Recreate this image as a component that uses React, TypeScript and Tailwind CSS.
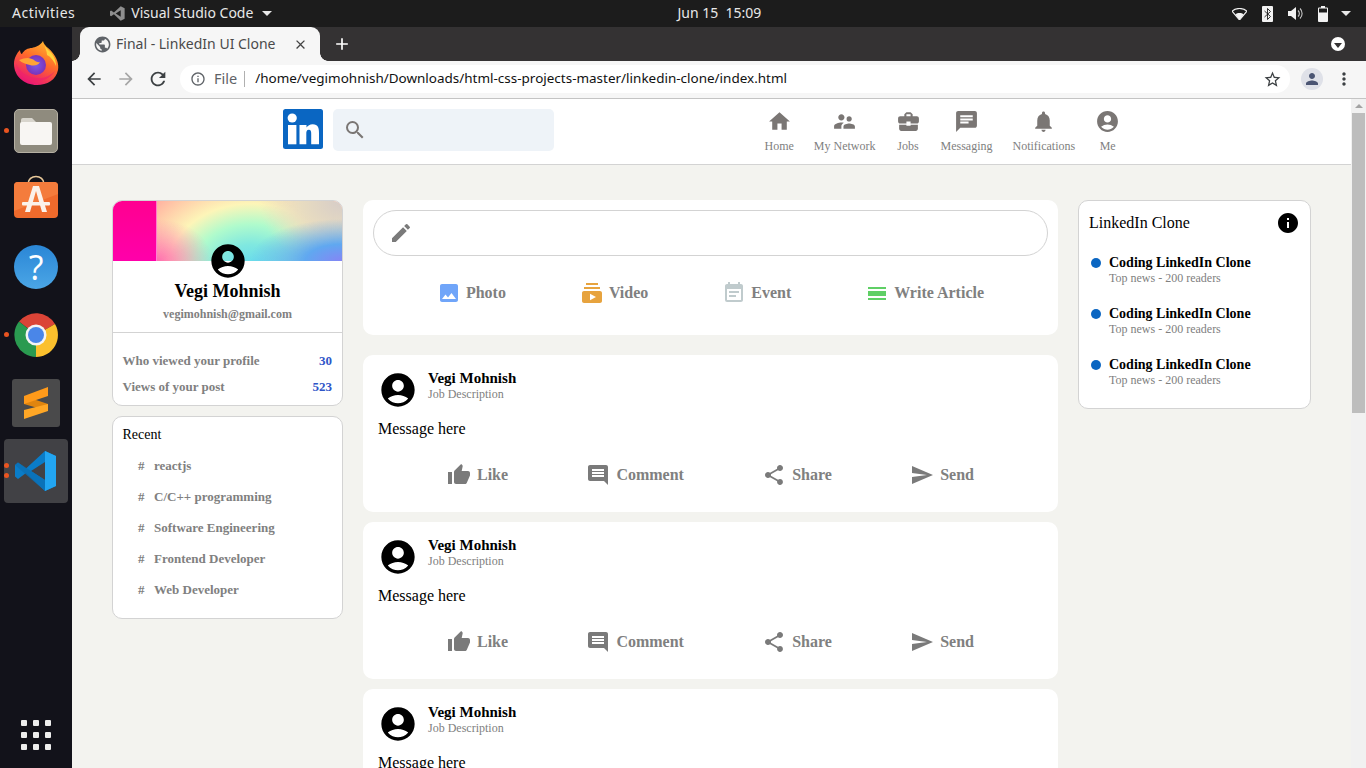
import type { ReactNode } from 'react'
import {
  MdAccountCircle,
  MdAdd,
  MdArrowBack,
  MdArrowForward,
  MdBusinessCenter,
  MdCalendarViewDay,
  MdChat,
  MdClose,
  MdComment,
  MdCreate,
  MdEventNote,
  MdHome,
  MdImage,
  MdInfo,
  MdInfoOutline,
  MdMoreVert,
  MdNotifications,
  MdPerson,
  MdPublic,
  MdRefresh,
  MdSearch,
  MdSend,
  MdShare,
  MdStarBorder,
  MdSubscriptions,
  MdSupervisorAccount,
  MdThumbUp,
} from 'react-icons/md'

const RunDot = ({ className }: { className: string }) => (
  <span className={`absolute left-[4px] h-[5px] w-[5px] rounded-full bg-[#e95420] ${className}`} />
)

const Firefox = () => (
  <svg width="46" height="46" viewBox="0 0 46 46">
    <defs>
      <linearGradient id="ffBody" x1="0.8" y1="0" x2="0.3" y2="1">
        <stop offset="0" stopColor="#ffbd2e" />
        <stop offset="0.45" stopColor="#ff6a2a" />
        <stop offset="1" stopColor="#e8107a" />
      </linearGradient>
      <radialGradient id="ffGlobe" cx="0.5" cy="0.5" r="0.6">
        <stop offset="0" stopColor="#7a5be8" />
        <stop offset="1" stopColor="#7a2bb0" />
      </radialGradient>
    </defs>
    <path d="M30 1c1 5 6 7 9 11 5 6 7 12 6 18-2 10-11 15-21 15C11 45 1 36 1 24c0-6 3-11 6-14 0 2 1 4 2 4 2-4 6-6 10-6 3-1 8-2 11-7z" fill="url(#ffBody)" />
    <circle cx="23" cy="25" r="10" fill="url(#ffGlobe)" />
    <path d="M31 4c1 4 5 6 8 10 3 4 4 8 4 12-2-5-5-9-9-11 0-4-2-7-3-11z" fill="#ffd53d" />
    <path d="M6 20c5-2 9-3 13-1 3 1 4 4 8 3-2 4-7 4-10 3-4-1-8-2-11-5z" fill="#ffa436" />
    <path d="M3 24c2 11 10 17 21 17 8 0 14-4 18-10-4 4-10 8-18 7C14 38 7 32 3 24z" fill="#f0226c" opacity="0.7" />
  </svg>
)

const FilesIcon = () => (
  <div className="flex h-[44px] w-[44px] items-center justify-center rounded-[5px] border border-[#b5b0a3] bg-[#8f8b7e]">
    <svg width="32" height="28" viewBox="0 0 32 28">
      <path d="M1 3a2 2 0 0 1 2-2h9l4 4v3H1z" fill="#d8d5cd" />
      <rect x="0" y="5" width="32" height="23" rx="2" fill="#f8f6f3" />
    </svg>
  </div>
)

const SoftwareIcon = () => (
  <svg width="46" height="46" viewBox="0 0 46 46">
    <path d="M15 9c0-10 16-10 16 0" fill="none" stroke="#e8c89a" strokeWidth="1.6" />
    <rect x="1" y="7" width="44" height="36" rx="4" fill="#ee6a2c" />
    <path d="M1 11a4 4 0 0 1 4-4h36a4 4 0 0 1 4 4v8L1 36z" fill="#f47c3c" />
    <path d="M20 11h6l8 26h-5l-6-21-6 21h-5z" fill="#fbf2ea" />
    <rect x="9" y="27" width="28" height="3.5" rx="1" fill="#fbf2ea" />
  </svg>
)

const HelpIcon = () => (
  <div className="mt-[2px] flex h-[44px] w-[44px] items-center justify-center rounded-full bg-[linear-gradient(180deg,#2a86d6,#4ba6e6)] font-['Open_Sans',sans-serif] text-[34px] font-normal leading-none text-white">
    ?
  </div>
)

const ChromeIcon = () => (
  <svg width="44" height="44" viewBox="0 0 44 44">
    <path d="M22 22 5 8.500A22 22 0 0 1 41 11z" fill="#db4437" />
    <path d="M22 22 41 11a22 22 0 0 1-19 33z" fill="#fbc02d" />
    <path d="M22 22v22A22 22 0 0 1 5 8.500z" fill="#2a9a50" />
    <circle cx="22" cy="22" r="10.5" fill="#f4f4f4" />
    <circle cx="22" cy="22" r="8" fill="#4a86e8" />
  </svg>
)

const SublimeIcon = () => (
  <div className="flex h-[48px] w-[48px] items-center justify-center rounded-[3px] bg-[#4a4a4b]">
    <svg width="25" height="32" viewBox="0 0 25 32">
      <path d="M0 9l24 8v7L0 17z" fill="#e0850f" />
      <path d="M24 0v9L0 17V9z" fill="#ff9a1a" />
      <path d="M24 17v7L0 32v-9z" fill="#ffa726" />
    </svg>
  </div>
)

const VsCodeIcon = () => (
  <div className="flex h-[64px] w-[64px] items-center justify-center rounded-[4px] bg-[#414145]">
    <svg width="42" height="42" viewBox="0 0 42 42">
      <path d="M30 1 41 6v30l-11 5-19-18-8 6-3-2.500V15l3-2.500 8 6z" fill="#0a7cc8" />
      <path d="M30 1 41 6v30l-11 5z" fill="#22a5f1" />
      <path d="M30 12 16 21l14 9z" fill="#414145" />
      <path d="M0 15l3-2.500L30 30v11z" fill="#0a6fb5" opacity="0.8" />
    </svg>
  </div>
)

const Dock = () => (
  <aside className="relative flex w-[72px] shrink-0 flex-col items-center bg-[#12121a] pb-[18px]">
    <div className="flex h-[70px] items-center pt-[2px]">
      <Firefox />
    </div>
    <div className="relative flex h-[68px] w-full items-center justify-center">
      <RunDot className="top-[31px]" />
      <FilesIcon />
    </div>
    <div className="flex h-[66px] items-center">
      <SoftwareIcon />
    </div>
    <div className="flex h-[70px] items-center">
      <HelpIcon />
    </div>
    <div className="relative flex h-[68px] w-full items-center justify-center">
      <RunDot className="top-[31px]" />
      <ChromeIcon />
    </div>
    <div className="flex h-[68px] items-center">
      <SublimeIcon />
    </div>
    <div className="relative flex h-[68px] w-full items-center justify-center">
      <RunDot className="top-[26px]" />
      <RunDot className="top-[36px]" />
      <VsCodeIcon />
    </div>
    <div className="mt-auto grid grid-cols-3 gap-[6px]">
      {Array.from({ length: 9 }).map((_, i) => (
        <span key={i} className="h-[6px] w-[6px] rounded-[1px] bg-[#eeeeee]" />
      ))}
    </div>
  </aside>
)

const TopBar = () => (
  <header className="relative flex h-[27px] items-center bg-[#1c1c1c] pl-[12px] pr-[15px] font-['Noto_Sans',sans-serif] text-[14px] text-[#e8e8e8]">
    <span className="-mt-[2px] tracking-[0.5px]">Activities</span>
    <svg className="ml-[35px]" width="15" height="15" viewBox="0 0 42 42">
      <path d="M30 1 41 6v30l-11 5-19-18-8 6-3-2.500V15l3-2.500 8 6zM30 12 16 21l14 9z" fill="#8e8e8e" fillRule="evenodd" />
    </svg>
    <span className="-mt-[2px] ml-[6px]">Visual Studio Code</span>
    <span className="ml-[9px] h-0 w-0 border-x-[5px] border-t-[5px] border-x-transparent border-t-[#e8e8e8]" />
    <span className="absolute left-[677.500px] top-[2px]">Jun 15&nbsp;&nbsp;15:09</span>
    <div className="ml-auto flex items-center">
      <svg width="15" height="12" viewBox="0 0 16 13">
        <path d="M0 3.500C4-.5 12-.5 16 3.500L8 13z" fill="none" stroke="#f2f2f2" strokeWidth="1.200" />
        <path d="M3.500 7C6 5 10 5 12.500 7L8 13z" fill="#f2f2f2" />
      </svg>
      <span className="ml-[15px] flex h-[16px] w-[11px] items-center justify-center rounded-[1px] bg-[#f2f2f2]">
        <svg width="7" height="12" viewBox="0 0 7 12">
          <path d="M.5 3l6 5.500-3 3V.500l3 3-6 5.500" fill="none" stroke="#1c1c1c" strokeWidth="0.900" />
        </svg>
      </span>
      <svg className="ml-[15px]" width="15" height="13" viewBox="0 0 15 13">
        <path d="M0 4h3l5-4v13l-5-4H0z" fill="#f2f2f2" />
        <path d="M10 3.500a4 4 0 0 1 0 6M12 1.500a7 7 0 0 1 0 10" fill="none" stroke="#c8c8c8" strokeWidth="1.100" />
      </svg>
      <svg className="ml-[15px]" width="10" height="16" viewBox="0 0 10 16">
        <path d="M3 0h4v1.500h2a1 1 0 0 1 1 1V15a1 1 0 0 1-1 1H1a1 1 0 0 1-1-1V2.500a1 1 0 0 1 1-1h2z" fill="#f2f2f2" />
        <rect x="1" y="2.500" width="8" height="4" fill="#1c1c1c" />
      </svg>
      <span className="ml-[13px] h-0 w-0 border-x-[5px] border-t-[5px] border-x-transparent border-t-[#e8e8e8]" />
    </div>
  </header>
)

const BrowserChrome = () => (
  <div className="font-['Noto_Sans',sans-serif]">
    <div className="flex h-[34px] items-end bg-[#343233] pl-[8px] pr-[21px]">
      <div className="relative flex h-[34px] w-[240px] items-center rounded-t-[9px] bg-[#f6f6f6] pl-[13px] pr-[12px] text-[14px] text-[#4a4a4a]">
        <span className="absolute -left-[8px] bottom-0 h-[8px] w-[8px] bg-[radial-gradient(circle_at_0_0,#343233_7.500px,#f6f6f6_8px)]" />
        <span className="absolute -right-[8px] bottom-0 h-[8px] w-[8px] bg-[radial-gradient(circle_at_100%_0,#343233_7.500px,#f6f6f6_8px)]" />
        <MdPublic size={19} className="text-[#5f6368]" />
        <span className="-mt-[1px] ml-[4px]">Final - LinkedIn UI Clone</span>
        <MdClose size={15} className="ml-auto text-[#444444]" />
      </div>
      <MdAdd size={20} className="mb-[7px] ml-[12px] text-white" />
      <span className="mb-[10px] ml-auto flex h-[14px] w-[14px] items-center justify-center rounded-full bg-white">
        <span className="mt-[2px] h-0 w-0 border-x-[4px] border-t-[5px] border-x-transparent border-t-[#343233]" />
      </span>
    </div>
    <div className="flex h-[38px] items-center border-b border-[#c4c4c4] bg-[#f6f6f6] pb-[1px] pl-[12px] pr-[12px]">
      <MdArrowBack size={20} className="text-[#3c4043]" />
      <MdArrowForward size={20} className="ml-[12px] text-[#a6a6a6]" />
      <MdRefresh size={22} className="ml-[11px] text-[#3c4043]" />
      <div className="ml-[11px] flex h-[28px] w-[1110px] items-center rounded-full bg-white pl-[10px] pr-[8px]">
        <MdInfoOutline size={16} className="text-[#5f6368]" />
        <span className="-mt-[1px] ml-[8px] text-[14.500px] text-[#5f6368]">File</span>
        <span className="ml-[7px] h-[16px] w-px bg-[#b0b0b0]" />
        <span className="-mt-[1px] ml-[10px] text-[13.470px] text-[#111111]">/home/vegimohnish/Downloads/html-css-projects-master/linkedin-clone/index.html</span>
        <MdStarBorder size={19} className="ml-auto text-[#3c4043]" />
      </div>
      <span className="ml-[11px] flex h-[22px] w-[22px] items-center justify-center rounded-full bg-[#dfe1e8]">
        <MdPerson size={18} className="text-[#4b5573]" />
      </span>
      <MdMoreVert size={20} className="ml-[11px] text-[#3c4043]" />
    </div>
  </div>
)

const NavItem = ({ icon, label }: { icon: ReactNode; label: string }) => (
  <div className="flex flex-col items-center text-[12px] leading-[14px] text-[#808080]">
    <span className="flex h-[28px] items-start text-[#7a7674]">{icon}</span>
    <span className="mt-[2px]">{label}</span>
  </div>
)

const SiteHeader = () => (
  <div className="flex h-[66px] shrink-0 items-start border-b border-[#d3d3d3] bg-white pl-[211px] pt-[10px]">
    <svg width="40" height="40" viewBox="0 0 40 40">
      <rect width="40" height="40" rx="2.500" fill="#0a66c2" />
      <circle cx="9.200" cy="9" r="4.600" fill="#fff" />
      <rect x="5" y="16" width="8.400" height="19.300" fill="#fff" />
      <path d="M16.500 16h7v2.600c1.200-2 3.500-3.300 6.200-3.300 5.500 0 6.300 3.600 6.300 8.600v11.400h-7.800V24.800c0-2.300-.2-4-2.400-4-2.200 0-2.500 1.900-2.500 4v10.500h-6.800z" fill="#fff" />
    </svg>
    <div className="ml-[10px] flex h-[42px] w-[221px] items-center rounded-[5px] bg-[#eef3f8] pl-[10px]">
      <MdSearch size={24} className="text-[#7a7674]" />
    </div>
    <nav className="ml-[210.500px] flex gap-[20px]">
      <NavItem icon={<MdHome size={25} />} label="Home" />
      <NavItem icon={<MdSupervisorAccount size={25} />} label="My Network" />
      <NavItem icon={<MdBusinessCenter size={25} />} label="Jobs" />
      <NavItem icon={<MdChat size={25} />} label="Messaging" />
      <NavItem icon={<MdNotifications size={25} />} label="Notifications" />
      <NavItem icon={<MdAccountCircle size={25} />} label="Me" />
    </nav>
  </div>
)

const ProfileCard = () => (
  <div className="overflow-hidden rounded-[10px] border border-[#d3d3d3] bg-white">
    <div className="h-[60px] bg-[linear-gradient(180deg,#ff0090,#ff00aa)] bg-[length:19%_100%] bg-no-repeat">
      <div className="ml-[19%] h-full bg-[radial-gradient(ellipse_30%_70%_at_0%_100%,#ff70b0_0,transparent_100%),radial-gradient(ellipse_50%_70%_at_100%_100%,#8585f5_0,#60a8f0_40%,transparent_100%),radial-gradient(ellipse_45%_110%_at_100%_0%,#d6ccc8_0,#e8dcc0_50%,transparent_100%),radial-gradient(ellipse_70%_170%_at_51%_115%,#5fd8f0_0,#80e8e0_25%,#b0fbcc_45%,#fdf5b8_65%,#ffc8a8_88%,#ffb0a0_100%)]" />
    </div>
    <div className="flex flex-col items-center">
      <MdAccountCircle size={40} className="-mt-[20px] text-black" />
      <h2 className="text-[18px] font-bold leading-[21px] text-black">Vegi Mohnish</h2>
      <p className="mt-[5px] text-[12px] font-bold leading-[14px] text-[#808080]">vegimohnish@gmail.com</p>
    </div>
    <div className="mt-[11px] border-t border-[#d3d3d3] pb-[11px] pl-[9.500px] pr-[10px] pt-[20px] text-[13px] font-bold leading-[15px] text-[#808080]">
      <div className="flex justify-between">
        <span>Who viewed your profile</span>
        <span className="text-[#2f55c8]">30</span>
      </div>
      <div className="mt-[11px] flex justify-between">
        <span>Views of your post</span>
        <span className="text-[#2f55c8]">523</span>
      </div>
    </div>
  </div>
)

const RecentCard = () => (
  <div className="mt-[10px] h-[203px] rounded-[10px] border border-[#d3d3d3] bg-white px-[9.500px] pt-[10px]">
    <h3 className="text-[14px] leading-[16px] text-black">Recent</h3>
    <ul className="mt-[7px] text-[13px] font-bold leading-[15px] text-[#808080]">
      {['reactjs', 'C/C++ programming', 'Software Engineering', 'Frontend Developer', 'Web Developer'].map((tag) => (
        <li key={tag} className="flex h-[31px] items-center pl-[15.500px]">
          <span className="w-[16px]">#</span>
          {tag}
        </li>
      ))}
    </ul>
  </div>
)

const ShareOption = ({ icon, label }: { icon: ReactNode; label: string }) => (
  <div className="flex items-center gap-[5px] text-[16px] font-bold text-[#808080]">
    {icon}
    <span>{label}</span>
  </div>
)

const ShareBox = () => (
  <div className="h-[135px] shrink-0 rounded-[10px] bg-white pt-[10px]">
    <div className="mx-[10px] flex h-[46px] items-center rounded-[25px] border border-[#d3d3d3] pl-[15px]">
      <MdCreate size={24} className="text-[#7a7a7a]" />
    </div>
    <div className="mt-[25px] flex justify-evenly">
      <ShareOption icon={<MdImage size={24} className="text-[#70a5f9]" />} label="Photo" />
      <ShareOption icon={<MdSubscriptions size={24} className="text-[#e7a33e]" />} label="Video" />
      <ShareOption icon={<MdEventNote size={24} className="text-[#c0cbcd]" />} label="Event" />
      <ShareOption icon={<MdCalendarViewDay size={24} className="text-[#5fcf65]" />} label="Write Article" />
    </div>
  </div>
)

const PostAction = ({ icon, label }: { icon: ReactNode; label: string }) => (
  <div className="flex items-center gap-[6px] text-[16px] font-bold text-[#808080]">
    {icon}
    <span>{label}</span>
  </div>
)

const Post = () => (
  <article className="mt-[10px] h-[157px] shrink-0 rounded-[10px] bg-white px-[15px] pt-[15px]">
    <div className="flex">
      <MdAccountCircle size={40} className="text-black" />
      <div className="ml-[10px]">
        <h4 className="text-[15px] font-bold leading-[17px] text-black">Vegi Mohnish</h4>
        <p className="text-[12px] leading-[14px] text-[#808080]">Job Description</p>
      </div>
    </div>
    <p className="mt-[10px] text-[16px] leading-[18px] text-black">Message here</p>
    <div className="mt-[25px] flex justify-between px-[69px]">
      <PostAction icon={<MdThumbUp size={24} className="text-[#7a7a7a]" />} label="Like" />
      <PostAction icon={<MdComment size={24} className="text-[#7a7a7a]" />} label="Comment" />
      <PostAction icon={<MdShare size={24} className="text-[#7a7a7a]" />} label="Share" />
      <PostAction icon={<MdSend size={24} className="text-[#7a7a7a]" />} label="Send" />
    </div>
  </article>
)

const NewsCard = () => (
  <div className="h-[209px] rounded-[10px] border border-[#d3d3d3] bg-white pl-[10px] pr-[10px] pt-[10px]">
    <div className="flex items-center justify-between">
      <h3 className="text-[16px] leading-[24px] text-black">LinkedIn Clone</h3>
      <MdInfo size={24} className="text-black" />
    </div>
    <ul className="mt-[20px]">
      {[0, 1, 2].map((n) => (
        <li key={n} className="flex h-[51px] items-start pl-[2px]">
          <span className="mt-[3px] h-[10px] w-[10px] shrink-0 rounded-full bg-[#0a66c2]" />
          <div className="ml-[8px]">
            <h4 className="text-[14px] font-bold leading-[16px] text-black">Coding LinkedIn Clone</h4>
            <p className="text-[12px] leading-[14px] text-[#808080]">Top news - 200 readers</p>
          </div>
        </li>
      ))}
    </ul>
  </div>
)

const Scrollbar = () => (
  <div className="flex w-[15px] shrink-0 flex-col items-center bg-[#f1f1f1]">
    <span className="mt-[5px] h-0 w-0 border-x-[4px] border-b-[4px] border-x-transparent border-b-[#a3a3a3]" />
    <span className="mt-[5px] h-[300px] w-[13px] bg-[#bdbdbd]" />
  </div>
)

export default function App() {
  return (
    <div className="flex h-[768px] flex-col overflow-hidden bg-[#12121a] font-['Liberation_Serif',serif]">
      <TopBar />
      <div className="flex min-h-0 flex-1">
        <Dock />
        <div className="flex min-w-0 flex-1 flex-col">
          <BrowserChrome />
          <div className="flex min-h-0 flex-1">
            <main className="flex min-w-0 flex-1 flex-col bg-[#f3f3ef]">
              <SiteHeader />
              <div className="flex min-h-0 flex-1 gap-[20px] overflow-hidden pl-[40px] pt-[35px]">
                <div className="w-[231px] shrink-0">
                  <ProfileCard />
                  <RecentCard />
                </div>
                <div className="flex w-[695px] shrink-0 flex-col">
                  <ShareBox />
                  <div className="mt-[10px] flex flex-col">
                    <Post />
                    <Post />
                    <Post />
                  </div>
                </div>
                <div className="w-[233px] shrink-0">
                  <NewsCard />
                </div>
              </div>
            </main>
            <Scrollbar />
          </div>
        </div>
      </div>
    </div>
  )
}
